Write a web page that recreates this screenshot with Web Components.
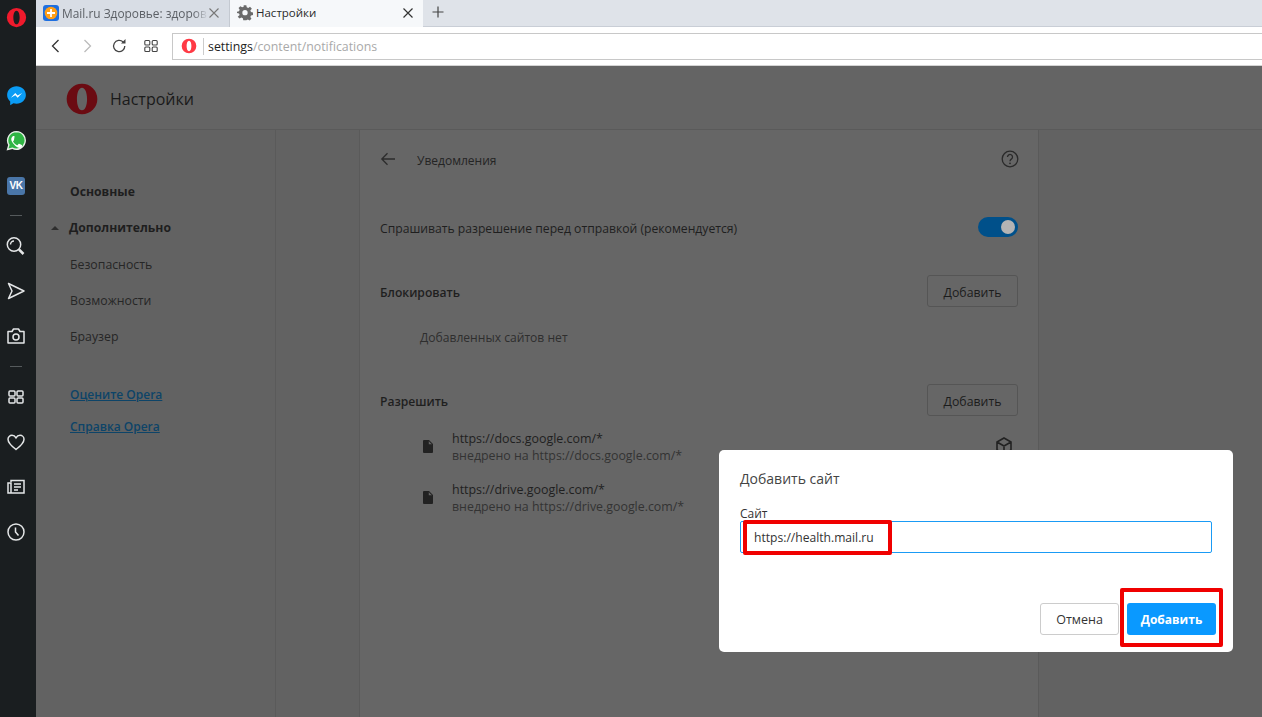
<!DOCTYPE html>
<html>
<head>
<meta charset="utf-8">
<title>Настройки</title>
<style>
  html, body { margin: 0; height: 100%; overflow: hidden; background: #626262; }
  body { font-family: "Open Sans", "Noto Sans", sans-serif; }
  opera-window { height: 717px; }
</style>
</head>
<body>

<opera-window>
  <side-rail slot="rail"></side-rail>
  <tab-strip slot="top"></tab-strip>
  <tool-bar slot="top"></tool-bar>
  <settings-page slot="page"></settings-page>
  <add-dialog slot="dialog"></add-dialog>
</opera-window>

<script>
const OPERA_O = 'M12 1a11 11 0 1 0 0 22 11 11 0 0 0 0-22zm0 3.2c2.3 0 3.6 3.5 3.6 7.8s-1.3 7.8-3.6 7.8-3.6-3.5-3.6-7.8 1.3-7.8 3.6-7.8z';

customElements.define('opera-window', class extends HTMLElement {
  constructor() {
    super();
    this.attachShadow({ mode: 'open' }).innerHTML = `
      <style>
        :host { display: flex; position: relative; width: 1262px; overflow: hidden; }
        .main { flex: 1; min-width: 0; display: flex; flex-direction: column; }
      </style>
      <slot name="rail"></slot>
      <div class="main">
        <slot name="top"></slot>
        <slot name="page"></slot>
      </div>
      <slot name="dialog"></slot>
    `;
  }
});

customElements.define('side-rail', class extends HTMLElement {
  constructor() {
    super();
    const line = 'fill="none" stroke="#e4e6e7" stroke-width="1.5"';
    this.attachShadow({ mode: 'open' }).innerHTML = `
      <style>
        :host { display: block; width: 36px; flex: none; background: #1a1e20; height: 717px; box-sizing: border-box; padding-right: 4px; }
        .logo { height: 34px; display: flex; align-items: center; justify-content: center; margin-bottom: 39px; }
        .item { height: 45px; display: flex; align-items: center; justify-content: center; }
        .sep { height: 15px; display: flex; align-items: center; justify-content: center; }
        .sep::before { content: ""; width: 12px; height: 1px; background: #555a5c; }
        .shift { margin-top: 1px; }
        .vk { width: 18px; height: 18px; border-radius: 3px; background: #4a76a8; color: #fff; font: bold 10px/18px "Liberation Sans", sans-serif; text-align: center; letter-spacing: -.5px; }
        .nudge { padding-top: 1px; box-sizing: border-box; }
        svg { display: block; }
      </style>
      <div class="logo"><svg width="21" height="21" viewBox="0 0 24 24"><path fill="#f01a2c" fill-rule="evenodd" d="${OPERA_O}"/></svg></div>
      <div class="item"><svg width="21" height="21" viewBox="0 0 24 24"><path fill="#0a9cf5" d="M12 1.500C6 1.500 1.300 5.900 1.300 11.500c0 3 1.300 5.500 3.500 7.300V23l3.700-2.100c1.100.3 2.300.5 3.500.5 6 0 10.700-4.400 10.700-9.900S18 1.500 12 1.500z"/><path fill="#fff" d="M5.500 14.600l5.100-5.500 2.700 2.800 5.100-2.800-5.100 5.500-2.600-2.800z"/></svg></div>
      <div class="item"><svg width="21" height="21" viewBox="0 0 24 24"><path fill="#2fb544" stroke="#e8efe8" stroke-width="1.600" d="M12 1.800A10.100 10.100 0 0 0 3.300 17L1.800 22.200l5.300-1.400A10.100 10.100 0 1 0 12 1.800z"/><path fill="#fff" d="M8.600 6.800c-.3 0-.8.100-1.200.6-.4.500-1.400 1.400-1.400 3.300s1.400 3.800 1.600 4c.2.300 2.800 4.300 6.800 5.600 1 .3 2.900.2 3.500-.9.500-.9.500-1.900.4-2.100-.1-.2-.4-.3-.8-.5l-2.400-1.100c-.3-.1-.6-.2-.8.200l-1 1.300c-.2.200-.4.300-.8.100-1.900-.9-3.300-2.200-4.300-3.900-.2-.4 0-.6.200-.8l.7-.9c.2-.3.2-.5.100-.8L9.800 7.500c-.3-.6-.6-.7-1.200-.7z"/></svg></div>
      <div class="item"><div class="vk">VK</div></div>
      <div class="sep"></div>
      <div class="item"><svg width="20" height="20" viewBox="0 0 20 20" ${line}><circle cx="8" cy="8.500" r="6.700"/><path d="M4.500 8.500a3.500 3.500 0 0 1 3.500-3.500"/><path d="M13 13.500l4.500 4.500" stroke-width="2.500"/></svg></div>
      <div class="item nudge"><svg width="20" height="20" viewBox="0 0 20 20" ${line}><path d="M2.500 2.500L18 10 2.500 17.500 6 10z" stroke-linejoin="round"/></svg></div>
      <div class="item"><svg width="20" height="20" viewBox="0 0 20 20" ${line}><path d="M2 5.500h4l1.500-2.500h5L14 5.500h4v11.500H2z" stroke-linejoin="round"/><circle cx="10" cy="11" r="3"/></svg></div>
      <div class="sep shift"></div>
      <div class="item"><svg width="18" height="18" viewBox="0 0 18 18" ${line}><rect x="2" y="3" width="6" height="5" rx="1"/><rect x="10" y="3" width="6" height="5" rx="1"/><rect x="2" y="10" width="6" height="5" rx="1"/><rect x="10" y="10" width="6" height="5" rx="1"/></svg></div>
      <div class="item nudge"><svg width="20" height="20" viewBox="0 0 20 20" ${line}><path d="M10 17.500C4 13 2 10.500 2 7.300 2 5 3.800 3.300 6 3.300c1.700 0 3.100.9 4 2.500.9-1.600 2.300-2.500 4-2.500 2.200 0 4 1.700 4 4 0 3.200-2 5.700-8 10.200z"/></svg></div>
      <div class="item nudge"><svg width="20" height="20" viewBox="0 0 20 20" ${line}><path d="M5 5V3.500h13v12.500H2V6h3v10"/><path d="M8 7h7M8 10h7M8 13h4"/></svg></div>
      <div class="item"><svg width="20" height="20" viewBox="0 0 20 20" ${line}><circle cx="10" cy="10" r="8"/><path d="M9.500 5.500V10l3 3.500"/></svg></div>
    `;
  }
});

customElements.define('tab-strip', class extends HTMLElement {
  constructor() {
    super();
    this.attachShadow({ mode: 'open' }).innerHTML = `
      <style>
        :host { display: flex; height: 27px; background: #dfe3e9; font: 11.900px "Open Sans", "Noto Sans", sans-serif; box-sizing: border-box; border-bottom: 1px solid #c9ced6; }
        .tab { width: 194px; height: 27px; flex: none; box-sizing: border-box; display: flex; align-items: center; padding: 0 9px 2px 7px; }
        .first { background: #d8dde5; border-right: 1px solid #c4c9d1; color: #5c6066; }
        .active { width: 193px; background: #f6f8fa; color: #2b2b2b; font-size: 11.500px; }
        .label { flex: 1; margin-left: 3px; white-space: nowrap; }
        .first .label { -webkit-mask-image: linear-gradient(90deg, #000 90%, transparent); mask-image: linear-gradient(90deg, #000 90%, transparent); }
        .plus { margin: 0 0 2px 9px; align-self: center; }
        svg { display: block; flex: none; }
      </style>
      <div class="tab first">
        <svg width="16" height="16" viewBox="0 0 16 16"><rect width="16" height="16" rx="3" fill="#1e6fe0"/><circle cx="8" cy="8" r="6.300" fill="#ff9e16"/><path d="M8 4v8M4 8h8" stroke="#fff" stroke-width="1.800"/></svg>
        <span class="label">Mail.ru Здоровье: здоров</span>
        <svg width="12" height="12" viewBox="0 0 12 12"><path d="M1.500 1.500l9 9m0-9l-9 9" stroke="#777" stroke-width="1.100" fill="none"/></svg>
      </div>
      <div class="tab active">
        <svg width="16" height="16" viewBox="0 0 24 24"><path fill="#6a6a6a" fill-rule="evenodd" d="M10 1h4l.6 3 2.300 1 2.600-1.700 2.800 2.800L20 8.700l1 2.300 3 .6v4l-3 .6-1 2.300 1.700 2.600-2.800 2.800-2.600-1.700-2.300 1-.6 0h-4l-.6-3-2.300-1-2.600 1.700-2.800-2.800L4 15.500 3 13.200l-3-.6v-2l3-.6 1-2.300L2.300 5.100l2.800-2.800L7.700 4 10 3zM12 8a4 4 0 1 0 0 8 4 4 0 0 0 0-8z" transform="translate(0 -.5)"/></svg>
        <span class="label">Настройки</span>
        <svg width="12" height="12" viewBox="0 0 12 12"><path d="M1.500 1.500l9 9m0-9l-9 9" stroke="#333" stroke-width="1.200" fill="none"/></svg>
      </div>
      <svg class="plus" width="12" height="12" viewBox="0 0 12 12"><path d="M6 .5v11M.5 6h11" stroke="#444" stroke-width="1.200"/></svg>
    `;
  }
});

customElements.define('tool-bar', class extends HTMLElement {
  constructor() {
    super();
    this.attachShadow({ mode: 'open' }).innerHTML = `
      <style>
        :host { display: flex; align-items: center; height: 39px; box-sizing: border-box; background: #fff; border-bottom: 1px solid #d4d4d4; padding: 1px 0 1px 13px; font: 12.350px "Open Sans", "Noto Sans", sans-serif; }
        .btn { width: 32px; display: flex; justify-content: flex-start; flex: none; }
        .btn.first { width: 31px; }
        .btn.last { width: 28px; }
        .addr { flex: 1; height: 27px; box-sizing: border-box; border: 1px solid #c8c8c8; border-right: 0; display: flex; align-items: center; padding-left: 8px; white-space: nowrap; }
        .bar { width: 1px; height: 17px; background: #ccc; margin: 0 4px 0 6px; }
        .url { padding-top: 1px; }
        .path { color: #a9a9a9; }
        b { font-weight: 400; color: #222; }
        svg { display: block; }
      </style>
      <div class="btn first"><svg width="14" height="16" viewBox="0 0 14 16"><path d="M9.500 2l-6 6 6 6" fill="none" stroke="#333" stroke-width="1.300"/></svg></div>
      <div class="btn"><svg width="14" height="16" viewBox="0 0 14 16"><path d="M4.500 2l6 6-6 6" fill="none" stroke="#bbb" stroke-width="1.300"/></svg></div>
      <div class="btn"><svg width="15" height="16" viewBox="0 0 15 16"><path d="M12.800 8a5.600 5.600 0 1 1-1.700-4" fill="none" stroke="#444" stroke-width="1.300"/><path d="M13.500 1v4.500H9z" fill="#444"/></svg></div>
      <div class="btn last"><svg width="14" height="14" viewBox="0 0 14 14" fill="none" stroke="#444" stroke-width="1.100"><rect x=".8" y="1.500" width="5" height="4.500" rx="1"/><rect x="8.200" y="1.500" width="5" height="4.500" rx="1"/><rect x=".8" y="8" width="5" height="4.500" rx="1"/><rect x="8.200" y="8" width="5" height="4.500" rx="1"/></svg></div>
      <div class="addr">
        <svg width="16" height="16" viewBox="0 0 24 24"><path fill="#ff3a45" fill-rule="evenodd" d="${OPERA_O}"/></svg>
        <span class="bar"></span>
        <span class="url"><b>settings</b><span class="path">/content/notifications</span></span>
      </div>
    `;
  }
});

customElements.define('nav-item', class extends HTMLElement {
  constructor() {
    super();
    this.attachShadow({ mode: 'open' }).innerHTML = `
      <style>
        :host { display: block; height: 36px; line-height: 18px; font-size: 12.300px; color: #262626; white-space: nowrap; }
        :host([strong]) { font-weight: 700; font-size: 12.200px; color: #1e1e1e; }
        :host([link]) { height: 32px; font-size: 12px; color: #0d4468; font-weight: 600; text-decoration: underline; }
      </style>
      <slot></slot>
    `;
  }
});

customElements.define('site-row', class extends HTMLElement {
  constructor() {
    super();
    this.attachShadow({ mode: 'open' }).innerHTML = `
      <style>
        :host { display: flex; align-items: center; height: 51px; box-sizing: border-box; padding: 0 0 0 43px; position: relative; font-size: 12.450px; line-height: 17px; }
        .text { margin-left: 19px; white-space: nowrap; color: #1f1f1f; }
        .sub { color: #333; font-size: 12.380px; }
        svg { display: block; flex: none; }
        ::slotted(svg) { position: absolute; right: 4px; top: 15px; }
      </style>
      <svg width="10" height="13" viewBox="0 0 10 13"><path fill="#222" d="M0 1a1 1 0 0 1 1-1h5l4 4v8a1 1 0 0 1-1 1H1a1 1 0 0 1-1-1z"/><path fill="#666" d="M5.800 1v3.200H9L8 3.500 6.500 2z"/></svg>
      <div class="text"><div><slot name="url"></slot></div><div class="sub"><slot name="by"></slot></div></div>
      <slot name="action"></slot>
    `;
  }
});

customElements.define('outline-button', class extends HTMLElement {
  constructor() {
    super();
    this.attachShadow({ mode: 'open' }).innerHTML = `
      <style>
        :host { display: flex; align-items: center; justify-content: center; width: 91px; height: 32px; box-sizing: border-box; border: 1px solid #555; border-radius: 3px; padding-top: 2px; font-size: 12.300px; font-weight: 400; color: #1c1c1c; flex: none; }
      </style>
      <slot></slot>
    `;
  }
});

customElements.define('settings-page', class extends HTMLElement {
  constructor() {
    super();
    this.attachShadow({ mode: 'open' }).innerHTML = `
      <style>
        :host { display: block; flex: 1; background: #626262; color: #1e1e1e; font-family: "Open Sans", "Noto Sans", sans-serif; }
        header { height: 64px; box-sizing: border-box; background: #646464; border-bottom: 1px solid #5a5a5a; display: flex; align-items: center; padding: 2px 0 0 30px; font-size: 16px; color: #1a1a1a; }
        header span { margin-left: 12px; }
        .body { display: flex; height: 587px; }
        nav { width: 240px; box-sizing: border-box; border-right: 1px solid #5a5a5a; padding: 53px 0 0 34px; flex: none; }
        .open { position: relative; margin-left: -1px; height: 37px; }
        .open::before { content: ""; position: absolute; left: -18px; top: 7px; border: 4px solid transparent; border-top: 0; border-bottom: 4px solid #2e2e2e; }
        .links { margin-top: 22px; }
        .panel { width: 680px; box-sizing: border-box; margin-left: 83px; background: #666; border: solid #5a5a5a; border-width: 0 1px; padding: 0 20px; flex: none; }
        .head { display: flex; align-items: center; height: 58px; padding-bottom: 1px; box-sizing: border-box; font-size: 12px; color: #242424; }
        .head span { flex: 1; margin-left: 21px; padding-top: 3px; }
        .head .help { margin-right: -1px; }
        .row { display: flex; align-items: center; justify-content: space-between; font-size: 12.180px; color: #1f1f1f; }
        .ask { height: 87px; padding-bottom: 6px; box-sizing: border-box; }
        .title { height: 32px; font-weight: 600; font-size: 12.100px; }
        .title span { padding-top: 2px; }
        .empty { height: 77px; padding: 14px 0 0 40px; box-sizing: border-box; font-size: 12.100px; line-height: 34px; color: #2e2e2e; }
        .toggle { width: 40px; height: 20px; border-radius: 10px; background: #00508a; position: relative; flex: none; margin-bottom: 3px; }
        .toggle::after { content: ""; position: absolute; right: 3px; top: 3px; width: 14px; height: 14px; border-radius: 50%; background: #b4b4b4; }
        .sites { padding-top: 5px; }
        svg { display: block; flex: none; }
      </style>
      <header>
        <svg width="32" height="32" viewBox="0 0 24 24"><path fill="#6b0b12" fill-rule="evenodd" d="M12 .5a11.500 11.500 0 1 0 0 23 11.500 11.500 0 0 0 0-23zm0 3c2.400 0 3.800 3.800 3.800 8.500s-1.400 8.500-3.800 8.500-3.800-3.800-3.800-8.500 1.400-8.500 3.800-8.500z"/></svg>
        <span>Настройки</span>
      </header>
      <div class="body">
        <nav>
          <nav-item strong>Основные</nav-item>
          <nav-item strong class="open">Дополнительно</nav-item>
          <nav-item>Безопасность</nav-item>
          <nav-item>Возможности</nav-item>
          <nav-item>Браузер</nav-item>
          <div class="links">
            <nav-item link>Оцените Opera</nav-item>
            <nav-item link>Справка Opera</nav-item>
          </div>
        </nav>
        <section class="panel">
          <div class="head">
            <svg width="16" height="14" viewBox="0 0 16 14"><path d="M15 7H2M7.500 1.200L1.800 7l5.700 5.800" fill="none" stroke="#2c2c2c" stroke-width="1.300"/></svg>
            <span>Уведомления</span>
            <svg class="help" width="18" height="18" viewBox="0 0 18 18"><circle cx="9" cy="9" r="7.800" fill="none" stroke="#2a2a2a" stroke-width="1.300"/><path d="M6.500 7a2.500 2.500 0 1 1 3.800 2.100C9.400 9.700 9 10.200 9 11.200" fill="none" stroke="#2a2a2a" stroke-width="1.300"/><circle cx="9" cy="13.300" r=".9" fill="#2a2a2a"/></svg>
          </div>
          <div class="row ask"><span>Спрашивать разрешение перед отправкой (рекомендуется)</span><i class="toggle"></i></div>
          <div class="row title"><span>Блокировать</span><outline-button>Добавить</outline-button></div>
          <div class="empty">Добавленных сайтов нет</div>
          <div class="row title"><span>Разрешить</span><outline-button>Добавить</outline-button></div>
          <div class="sites">
            <site-row>
              <span slot="url">https://docs.google.com/*</span>
              <span slot="by">внедрено на https://docs.google.com/*</span>
              <svg slot="action" width="20" height="20" viewBox="0 0 20 20" fill="none" stroke="#222" stroke-width="1.600"><path d="M10 2l7 4v8l-7 4-7-4V6zM3 6l7 4 7-4M10 10v8"/></svg>
            </site-row>
            <site-row>
              <span slot="url">https://drive.google.com/*</span>
              <span slot="by">внедрено на https://drive.google.com/*</span>
            </site-row>
          </div>
        </section>
      </div>
    `;
  }
});

customElements.define('add-dialog', class extends HTMLElement {
  constructor() {
    super();
    this.attachShadow({ mode: 'open' }).innerHTML = `
      <style>
        :host { display: flex; flex-direction: column; position: absolute; left: 719px; top: 450px; width: 514px; height: 202px; box-sizing: border-box; background: #fff; border-radius: 5px; padding: 20px 17px 17px 21px; color: #333; font-family: "Open Sans", "Noto Sans", sans-serif; }
        h2 { margin: 0; font-size: 14px; font-weight: 400; line-height: 18px; color: #444; }
        label { display: block; margin-top: 17px; font-size: 12px; line-height: 17px; color: #333; }
        .field { height: 32px; box-sizing: border-box; border: 1px solid #1a9bf5; border-radius: 2px; padding-left: 13px; display: flex; align-items: center; font-size: 12.100px; color: #333; margin-top: -1px; width: 472px; }
        .actions { margin-top: auto; display: flex; justify-content: flex-end; gap: 8px; }
        button { height: 32px; border-radius: 3px; font: 12.500px "Open Sans", "Noto Sans", sans-serif; padding: 0; box-sizing: border-box; }
        .cancel { width: 79px; background: #fff; border: 1px solid #ccc; color: #333; }
        .ok { width: 89px; background: #0a99ff; border: 0; color: #fff; font-size: 12px; font-weight: 700; }
        .mark { position: absolute; box-sizing: border-box; border: 4px solid #f00000; border-radius: 2px; }
        .mark.url { left: 24px; top: 70px; width: 149px; height: 35px; }
        .mark.btn { left: 401px; top: 138px; width: 103px; height: 59px; }
      </style>
      <h2>Добавить сайт</h2>
      <label>Сайт</label>
      <div class="field">https://health.mail.ru</div>
      <div class="actions"><button class="cancel">Отмена</button><button class="ok">Добавить</button></div>
      <i class="mark url"></i>
      <i class="mark btn"></i>
    `;
  }
});
</script>
</body>
</html>
